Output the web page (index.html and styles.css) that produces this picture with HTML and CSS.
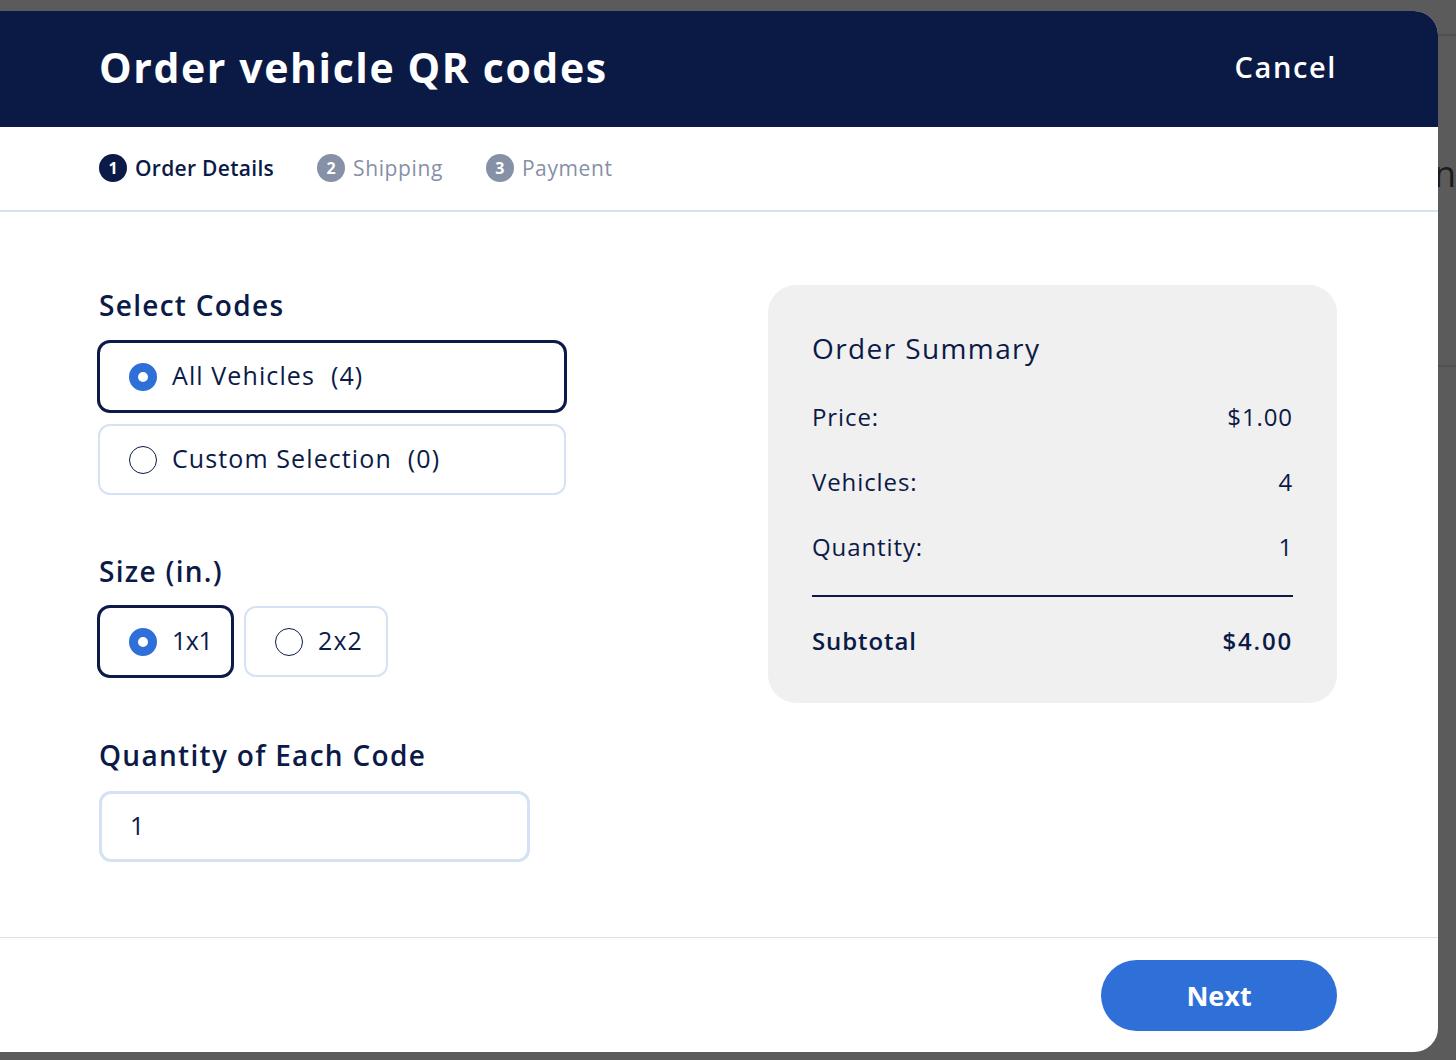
FILE: index.html
```html
<!DOCTYPE html>
<html lang="en">
<head>
<meta charset="utf-8">
<title>Order vehicle QR codes</title>
<link rel="stylesheet" href="styles.css">
</head>
<body>
<div class="modal">
  <header class="modal-header">
    <h1 class="modal-title">Order vehicle QR codes</h1>
    <button class="cancel-btn">Cancel</button>
  </header>
  <nav class="steps">
    <div class="step step-active"><span class="step-num">1</span><span class="step-label">Order Details</span></div>
    <div class="step"><span class="step-num">2</span><span class="step-label">Shipping</span></div>
    <div class="step"><span class="step-num">3</span><span class="step-label">Payment</span></div>
  </nav>
  <main class="modal-body">
    <section class="form-col">
      <h2 class="field-title">Select Codes</h2>
      <div class="option-list">
        <label class="option option-wide option-selected"><span class="radio radio-on"></span><span class="option-text">All Vehicles<span class="count">(4)</span></span></label>
        <label class="option option-wide"><span class="radio"></span><span class="option-text">Custom Selection<span class="count">(0)</span></span></label>
      </div>
      <h2 class="field-title size-title">Size (in.)</h2>
      <div class="size-list">
        <label class="option option-size size-1 option-selected"><span class="radio radio-on"></span><span class="option-text">1x1</span></label>
        <label class="option option-size size-2"><span class="radio"></span><span class="option-text">2x2</span></label>
      </div>
      <h2 class="field-title qty-title">Quantity of Each Code</h2>
      <div class="qty-input">1</div>
    </section>
    <aside class="summary">
      <h3 class="summary-title">Order Summary</h3>
      <div class="summary-row"><span>Price:</span><span>$1.00</span></div>
      <div class="summary-row"><span>Vehicles:</span><span>4</span></div>
      <div class="summary-row"><span>Quantity:</span><span>1</span></div>
      <div class="summary-divider"></div>
      <div class="summary-row summary-total"><span>Subtotal</span><span>$4.00</span></div>
    </aside>
  </main>
  <footer class="modal-footer">
    <button class="next-btn">Next</button>
  </footer>
</div>
<div class="backdrop-strip">
  <div class="bg-line bg-line-top"></div>
  <div class="bg-letter">n</div>
  <div class="bg-line bg-line-mid"></div>
</div>
</body>
</html>
```

FILE: styles.css
```css
* { box-sizing: border-box; }
html, body { margin: 0; padding: 0; }
body {
  background: #5b5b5b;
  font-family: "Open Sans", "Noto Sans", sans-serif;
  color: #0b1a47;
  display: flex;
  align-items: flex-start;
  height: 1060px;
  overflow: hidden;
}
.modal {
  width: 1438px;
  flex: none;
  height: 1041px;
  margin-top: 11px;
  background: #fff;
  border-radius: 0 24px 24px 0;
  overflow: hidden;
  display: flex;
  flex-direction: column;
}
.modal-header {
  height: 116px;
  background: #0a1a45;
  display: flex;
  align-items: center;
  justify-content: space-between;
  padding: 0 101px 4px 99px;
}
.modal-title {
  margin: 0;
  color: #fff;
  font-size: 41px;
  font-weight: 700;
  letter-spacing: 1.6px;
  line-height: 1;
}
.cancel-btn {
  background: none;
  border: none;
  padding: 0 0 2px 0;
  color: #fff;
  font-family: inherit;
  font-size: 29px;
  font-weight: 600;
  letter-spacing: 1.6px;
  cursor: pointer;
}
.steps {
  height: 85px;
  border-bottom: 2px solid #d4e2f4;
  display: flex;
  align-items: center;
  padding: 0 0 2px 99px;
  gap: 43px;
}
.step {
  display: flex;
  align-items: center;
  gap: 8px;
  color: #8690a6;
  font-size: 21px;
  font-weight: 400;
  letter-spacing: 0.6px;
}
.step-num {
  width: 28px;
  height: 28px;
  border-radius: 50%;
  background: #8690a6;
  color: #fff;
  font-size: 16px;
  font-weight: 700;
  letter-spacing: 0;
  display: flex;
  align-items: center;
  justify-content: center;
}
.step-active { color: #0b1a47; font-weight: 600; letter-spacing: 0.3px; }
.step-active .step-num { background: #0b1a47; }
.modal-body {
  flex: 1;
  display: flex;
  justify-content: space-between;
  align-items: flex-start;
  padding: 73px 101px 0 97px;
}
.form-col {
  width: 470px;
  display: flex;
  flex-direction: column;
  align-items: flex-start;
  padding-top: 3px;
}
.field-title {
  margin: 0 0 0 2px;
  font-size: 28px;
  line-height: 34px;
  font-weight: 600;
  letter-spacing: 1.3px;
}
.option-list {
  margin-top: 19px;
  display: flex;
  flex-direction: column;
  gap: 12px;
}
.option {
  height: 71px;
  border: 2px solid #d4e2f4;
  border-radius: 12px;
  display: flex;
  align-items: center;
  gap: 15px;
  font-size: 25px;
  font-weight: 500;
  letter-spacing: 1.1px;
  background: #fff;
}
.option-text { padding-bottom: 3px; }
.option-wide {
  width: 468px;
  margin-left: 1px;
  padding-left: 29px;
}
.option-selected {
  border-color: #0b1a47;
  box-shadow: 0 0 0 1px #0b1a47;
}
.option-size {
  padding: 0 0 0 29px;
  margin-left: 1px;
}
.size-1 { width: 135px; letter-spacing: -0.5px; }
.size-2 { width: 144px; }
.count { margin-left: 16px; }
.radio {
  width: 28px;
  height: 28px;
  border-radius: 50%;
  border: 1.5px solid #0b1a47;
  background: #fff;
  flex: none;
}
.radio-on {
  border: 9px solid #2f6fd8;
  background: #fff;
}
.size-title { margin-top: 59px; }
.size-list {
  margin-top: 18px;
  display: flex;
  gap: 10px;
}
.qty-title { margin-top: 61px; }
.qty-input {
  margin-top: 19px;
  margin-left: 2px;
  width: 431px;
  height: 71px;
  border: 3px solid #d4e2f4;
  border-radius: 12px;
  padding-left: 28px;
  padding-bottom: 3px;
  display: flex;
  align-items: center;
  font-size: 25px;
  font-weight: 500;
}
.summary {
  width: 569px;
  height: 418px;
  background: #f0f0f0;
  border-radius: 28px;
  padding: 44px 44px 0 44px;
}
.summary-title {
  margin: 0;
  font-size: 28px;
  line-height: 38px;
  font-weight: 500;
  letter-spacing: 1.4px;
}
.summary-row {
  display: flex;
  justify-content: space-between;
  font-size: 24px;
  line-height: 30px;
  margin-top: 35px;
  letter-spacing: 0.9px;
}
.summary-row:first-of-type { margin-top: 35px; }
.summary-divider {
  height: 1.5px;
  background: #0b1a47;
  margin-top: 33px;
}
.summary-total {
  font-weight: 600;
  margin-top: 29px;
}
.summary-total span:last-child { letter-spacing: 1.8px; }
.modal-footer {
  height: 115px;
  border-top: 1px solid #d9e2ee;
  display: flex;
  justify-content: flex-end;
  align-items: flex-start;
  padding: 22px 101px 0 0;
}
.next-btn {
  width: 236px;
  height: 71px;
  border: none;
  border-radius: 36px;
  background: #2f6fd8;
  color: #fff;
  font-family: inherit;
  font-size: 27px;
  font-weight: 700;
  padding-bottom: 2px;
  cursor: pointer;
}
.backdrop-strip {
  flex: 1;
  height: 1060px;
  overflow: hidden;
}
.bg-line {
  height: 2px;
  background: #4f5255;
}
.bg-line-top { margin-top: 34px; }
.bg-letter {
  margin-top: 118px;
  margin-left: -4px;
  font-size: 36px;
  line-height: 40px;
  color: #1b1b1b;
  font-family: "Open Sans", sans-serif;
}
.bg-line-mid { margin-top: 171px; }
```
